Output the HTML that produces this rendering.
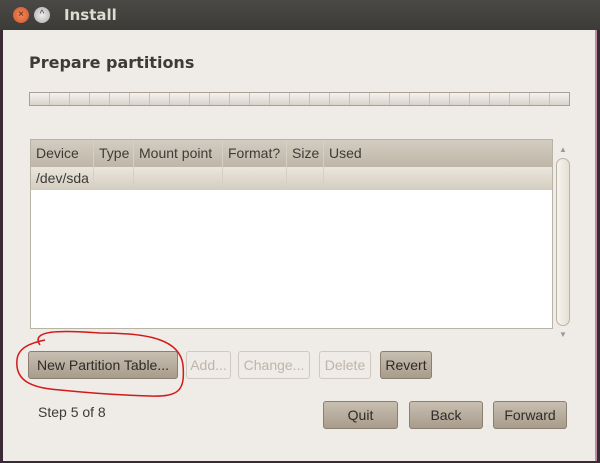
<!DOCTYPE html>
<html><head><style>
body{margin:0;width:600px;height:463px;background:#3a2a35;font-family:"Liberation Sans",sans-serif;position:relative;overflow:hidden}
.t{position:absolute;left:0;top:0;width:600px;height:30px;background:linear-gradient(#4a4945,#3c3b37)}
.w{position:absolute;left:3px;top:30px;width:592px;height:431px;background:#efebe7;border-right:2px solid #c48aa0}
.a{position:absolute;white-space:nowrap}
.btn{position:absolute;height:28px;border:1px solid #8a7f70;border-radius:3px;background:linear-gradient(#c8bfb2,#a89c8b);font-size:14px;color:#2e2b28;text-align:center;line-height:26px;box-sizing:border-box;white-space:nowrap}
.dis{background:#efebe7;border-color:#d0c9bf;color:#bdb5aa}
.hd{position:absolute;top:0;height:27px;line-height:27px;font-size:14px;color:#3c3b37;border-right:1px solid #d6cfc5;padding-left:5px;box-sizing:border-box;white-space:nowrap;overflow:hidden}
</style></head><body>
<div class="t">
<div class="a" style="left:13px;top:7px;width:16px;height:16px;border-radius:50%;background:radial-gradient(#f08a5d,#d0552a);font-size:10px;line-height:16px;text-align:center;color:#4a2010">×</div>
<div class="a" style="left:34px;top:7px;width:16px;height:16px;border-radius:50%;background:radial-gradient(#eee,#aaa);font-size:10px;line-height:16px;text-align:center;color:#444">^</div>
<div class="a" style="left:64px;top:6px;color:#dfdbd2;font-weight:bold;font-size:15px;font-family:'DejaVu Sans',sans-serif">Install</div>
</div>
<div class="w"></div>
<div class="a" style="left:29px;top:53px;font-weight:bold;font-size:16px;color:#3c3b37;font-family:'DejaVu Sans',sans-serif">Prepare partitions</div>
<div class="a" style="left:29px;top:92px;width:541px;height:14px;border:1px solid #a8a095;box-sizing:border-box;background:repeating-linear-gradient(90deg,transparent 0 19px,#c9c2b8 19px 20px),linear-gradient(#f4f2ee,#d8d3cb)"></div>
<div class="a" style="left:30px;top:139px;width:523px;height:190px;border:1px solid #b9b2a6;background:#fff;box-sizing:border-box;overflow:hidden">
<div class="a" style="left:0;top:0;width:523px;height:27px;background:linear-gradient(#d3ccc1,#bfb6a8)">
<div class="hd" style="left:0;width:63px">Device</div>
<div class="hd" style="left:63px;width:40px">Type</div>
<div class="hd" style="left:103px;width:89px">Mount point</div>
<div class="hd" style="left:192px;width:64px">Format?</div>
<div class="hd" style="left:256px;width:37px">Size</div>
<div class="hd" style="left:293px;width:100px;border:none">Used</div>
</div>
<div class="a" style="left:0;top:27px;width:523px;height:23px;background:linear-gradient(#ebe6de,#d4ccbf)">
<div class="hd" style="left:0;width:63px;height:23px;line-height:23px">/dev/sda</div>
<div class="hd" style="left:63px;width:40px;height:23px"></div>
<div class="hd" style="left:103px;width:89px;height:23px"></div>
<div class="hd" style="left:192px;width:64px;height:23px"></div>
<div class="hd" style="left:256px;width:37px;height:23px"></div>
</div>
</div>
<div class="a" style="left:559px;top:145px;font-size:8px;color:#999">▲</div>
<div class="a" style="left:556px;top:158px;width:14px;height:168px;border:1px solid #b9b2a6;border-radius:7px;background:linear-gradient(90deg,#f6f3ee,#e6e0d6);box-sizing:border-box"></div>
<div class="a" style="left:559px;top:330px;font-size:8px;color:#999">▼</div>
<div class="btn" style="left:28px;top:351px;width:150px">New Partition Table...</div>
<div class="btn dis" style="left:186px;top:351px;width:45px">Add...</div>
<div class="btn dis" style="left:238px;top:351px;width:72px">Change...</div>
<div class="btn dis" style="left:319px;top:351px;width:52px">Delete</div>
<div class="btn" style="left:380px;top:351px;width:52px">Revert</div>
<div class="a" style="left:38px;top:404px;font-size:14px;color:#3c3b37">Step 5 of 8</div>
<div class="btn" style="left:323px;top:401px;width:75px">Quit</div>
<div class="btn" style="left:409px;top:401px;width:74px">Back</div>
<div class="btn" style="left:493px;top:401px;width:74px">Forward</div>
<svg class="a" style="left:0;top:0" width="600" height="463"><path d="M40 345 C30 330 60 330 100 333 C150 333 180 340 183 365 C185 390 180 397 150 396 C110 395 80 392 60 390 C30 388 15 380 17 360 C18 348 30 343 45 340" fill="none" stroke="#d21a1a" stroke-width="1.5"/></svg>
</body></html>
